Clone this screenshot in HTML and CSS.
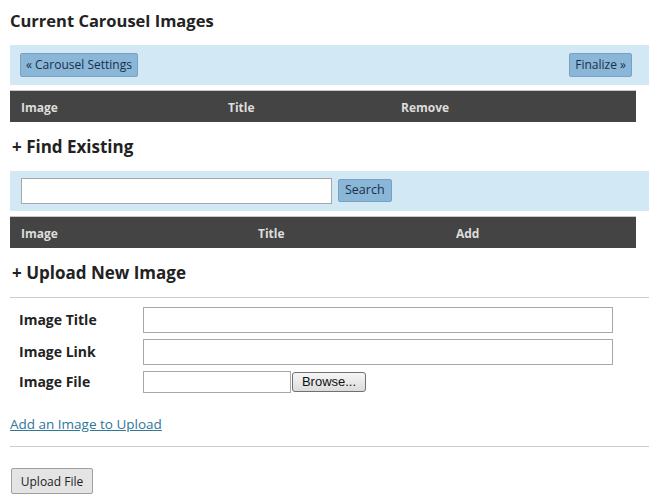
FILE: index.html
```html
<!DOCTYPE html>
<html>
<head>
<meta charset="utf-8">
<link rel="stylesheet" href="styles.css">
</head>
<body>
<div class="page">
  <h2 class="heading first">Current Carousel Images</h2>
  <div class="bar nav-bar">
    <button class="blue-btn">« Carousel Settings</button>
    <button class="blue-btn">Finalize »</button>
  </div>
  <div class="table-head head-a">
    <span class="c1">Image</span><span class="c2">Title</span><span class="c3">Remove</span>
  </div>

  <h2 class="heading sub">+ Find Existing</h2>
  <div class="bar search-bar">
    <input class="search-input" type="text">
    <button class="blue-btn search-btn">Search</button>
  </div>
  <div class="table-head head-b">
    <span class="c1">Image</span><span class="c2">Title</span><span class="c3">Add</span>
  </div>

  <h2 class="heading sub">+ Upload New Image</h2>
  <hr class="rule">
  <div class="form">
    <div class="row"><label>Image Title</label><input class="text-input" type="text"></div>
    <div class="row"><label>Image Link</label><input class="text-input" type="text"></div>
    <div class="row"><label>Image File</label><span class="file"><span class="file-box"></span><span class="browse">Browse...</span></span></div>
  </div>
  <a class="add-link" href="#">Add an Image to Upload</a>
  <hr class="rule rule2">
  <button class="upload-btn">Upload File</button>
</div>
</body>
</html>
```
FILE: styles.css
```css
* { box-sizing: border-box; }
body {
  margin: 0;
  background: #fff;
  font-family: "Open Sans", "DejaVu Sans", sans-serif;
  color: #222;
}
.page { padding: 0 7px 0 10px; width: 656px; }
.heading {
  margin: 0;
  font-size: 16.5px;
  font-weight: 700;
  color: #222;
  height: 20px;
  line-height: 20px;
  white-space: nowrap;
}
.heading.first { margin-top: 11px; margin-bottom: 14px; }
.heading.sub { font-size: 17px; margin-top: 15px; margin-bottom: 14px; padding-left: 2px; }
.bar {
  background: #d2e8f5;
  height: 40px;
  display: flex;
  align-items: center;
  padding: 0 10px;
}
.nav-bar { justify-content: space-between; padding: 0 17px 0 10px; }
.blue-btn {
  font-family: "Open Sans", "DejaVu Sans", sans-serif;
  font-size: 12px;
  color: #183048;
  background: #8ab6d8;
  border: 1px solid #79a2c2;
  border-radius: 2px;
  height: 24px;
  padding: 0 5px;
  line-height: 20px;
}
.table-head {
  background: #444;
  border-top: 1px solid #c8c8c8;
  height: 32px;
  margin-top: 5px;
  width: 626px;
  color: #ddd;
  font-size: 12px;
  font-weight: 700;
  position: relative;
}
.table-head span { position: absolute; top: 8px; }
.c1 { left: 11px; }
.head-a .c2 { left: 218px; }
.head-a .c3 { left: 391px; }
.head-b .c2 { left: 248px; }
.head-b .c3 { left: 446px; }
.search-bar { padding-left: 11px; }
.search-input {
  width: 311px;
  height: 26px;
  border: 1px solid #a8a8a8;
  background: #fff;
  margin: 0;
}
.search-btn { margin-left: 6px; height: 23px; margin-top: -2px; padding: 0 6px; font-size: 12.5px; }
.rule {
  border: 0;
  border-top: 1px solid #ccc;
  margin: 0;
  width: 639px;
}
.form { padding: 9px 0 0 9px; }
.row { display: flex; align-items: flex-start; height: 32px; }
.row label {
  width: 124px;
  font-size: 14px;
  font-weight: 700;
  color: #222;
  line-height: 26px;
}
.text-input {
  width: 470px;
  height: 26px;
  border: 1px solid #a8a8a8;
  margin: 0;
}
.file { display: flex; align-items: center; height: 22px; }
.file-box {
  width: 148px;
  height: 22px;
  border: 1px solid #a8a8a8;
  display: block;
}
.browse {
  margin-left: 1px;
  height: 20px;
  width: 74px;
  border: 1px solid #707070;
  border-radius: 3px;
  background: linear-gradient(#f6f6f6, #dcdcdc);
  font-family: "Liberation Sans", Arial, sans-serif;
  font-size: 13px;
  color: #111;
  text-align: center;
  line-height: 18px;
}
.row:last-child label { margin-top: -2px; }
.add-link {
  display: block;
  margin-top: 13px;
  font-size: 13.5px;
  color: #2f7699;
  line-height: 16px;
}
.rule2 { margin-top: 14px; }
.upload-btn {
  margin-top: 21px;
  margin-left: 1px;
  font-family: "Open Sans", "DejaVu Sans", sans-serif;
  font-size: 12px;
  color: #222;
  background: #e4e4e4;
  border: 1px solid #a0a0a0;
  border-radius: 2px;
  height: 26px;
  width: 82px;
  padding: 0;
}
```
